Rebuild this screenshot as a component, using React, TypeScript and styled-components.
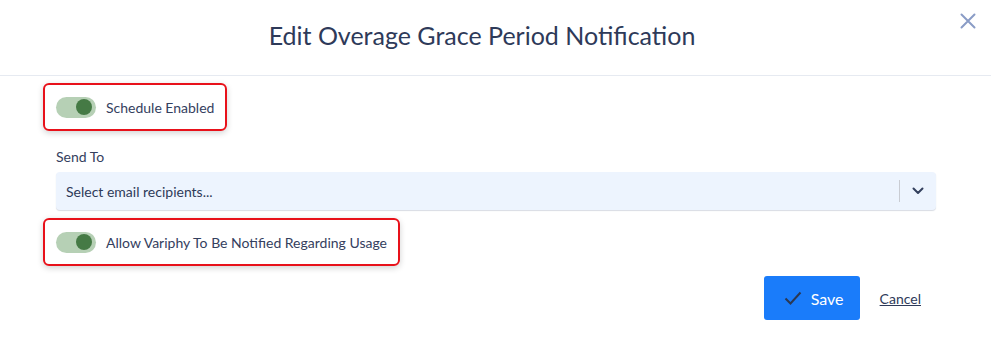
import React from 'react'
import styled, { createGlobalStyle } from 'styled-components'

const GlobalStyle = createGlobalStyle`
    body {
        margin: 0;
        background: #ffffff;
        font-family: Lato, "Open Sans", sans-serif;
        color: #2e3a59;
    }
`

const Toggle = ({ on }: { on: boolean }) => (
    <Track $on={on}>
        <Knob $on={on} />
    </Track>
)

export default function App() {
    return (
        <Modal>
            <GlobalStyle />
            <Header>
                <Title>Edit Overage Grace Period Notification</Title>
                <Close aria-label="close">
                    <svg width="16" height="16" viewBox="0 0 16 16">
                        <path d="M1.5 1.5 L14.5 14.5 M14.5 1.5 L1.5 14.5" stroke="#8a9cc6" strokeWidth="2" strokeLinecap="round" />
                    </svg>
                </Close>
            </Header>
            <Body>
                <Highlight>
                    <Toggle on />
                    <ToggleLabel>Schedule Enabled</ToggleLabel>
                </Highlight>

                <Field>
                    <FieldLabel>Send To</FieldLabel>
                    <Select>
                        <Placeholder>Select email recipients...</Placeholder>
                        <Separator />
                        <Chevron>
                            <svg width="12" height="8" viewBox="0 0 12 8">
                                <path d="M1.5 1.5 L6 6 L10.5 1.5" fill="none" stroke="#34405e" strokeWidth="2" strokeLinecap="round" strokeLinejoin="round" />
                            </svg>
                        </Chevron>
                    </Select>
                </Field>

                <Highlight>
                    <Toggle on />
                    <ToggleLabel>Allow Variphy To Be Notified Regarding Usage</ToggleLabel>
                </Highlight>

                <Actions>
                    <SaveButton>
                        <svg width="18" height="14" viewBox="0 0 18 14">
                            <path d="M1.5 7.5 L6.5 12.5 L16.5 1.5" fill="none" stroke="#2b3852" strokeWidth="2" />
                        </svg>
                        Save
                    </SaveButton>
                    <CancelLink href="#">Cancel</CancelLink>
                </Actions>
            </Body>
        </Modal>
    )
}

const Modal = styled.div`
    width: 991px;
    height: 354px;
    background: #ffffff;
    overflow: hidden;
`

const Header = styled.header`
    position: relative;
    height: 76px;
    border-bottom: 1px solid #e6eaf1;
    display: flex;
    align-items: center;
    justify-content: center;
    padding: 0 27px 5px 0;
    box-sizing: border-box;
`

const Title = styled.h1`
    margin: 0;
    font-size: 25px;
    font-weight: 400;
    color: #2e3a59;
`

const Close = styled.button`
    position: absolute;
    top: 13px;
    right: 15px;
    border: 0;
    background: none;
    padding: 0;
    display: flex;
    cursor: pointer;
`

const Body = styled.div`
    padding: 7px 55px 0 56px;
    display: flex;
    flex-direction: column;
    align-items: flex-start;
`

const Highlight = styled.div`
    display: inline-flex;
    align-items: center;
    gap: 10px;
    height: 48px;
    box-sizing: border-box;
    margin-left: -13px;
    padding: 0 11px 0 11px;
    border: 2px solid #e8111a;
    border-radius: 6px;
    box-shadow: 0 2px 6px rgba(0, 0, 0, 0.18);
`

const Track = styled.span<{ $on: boolean }>`
    width: 40px;
    height: 21px;
    border-radius: 11px;
    background: ${p => (p.$on ? '#b6d0b5' : '#d8dde6')};
    display: flex;
    align-items: center;
    justify-content: ${p => (p.$on ? 'flex-end' : 'flex-start')};
    padding: 0 4px;
    box-sizing: border-box;
`

const Knob = styled.span<{ $on: boolean }>`
    width: 16px;
    height: 16px;
    border-radius: 50%;
    background: ${p => (p.$on ? '#457a45' : '#ffffff')};
`

const ToggleLabel = styled.span`
    font-size: 14px;
    color: #34405e;
`

const Field = styled.div`
    width: 100%;
    margin-top: 17px;
    margin-bottom: 8px;
`

const FieldLabel = styled.div`
    font-size: 14px;
    color: #34405e;
    line-height: 17px;
    margin-bottom: 7px;
`

const Select = styled.div`
    height: 38px;
    width: 100%;
    background: #edf4fe;
    border-radius: 4px;
    box-shadow: 0 1px 1px rgba(40, 60, 100, 0.18);
    display: flex;
    align-items: center;
    box-sizing: border-box;
`

const Placeholder = styled.span`
    flex: 1;
    padding-left: 10px;
    font-size: 14px;
    color: #2e3a59;
`

const Separator = styled.span`
    width: 1px;
    height: 22px;
    background: #c9ccd3;
`

const Chevron = styled.span`
    width: 36px;
    display: flex;
    justify-content: center;
`

const Actions = styled.div`
    align-self: flex-end;
    display: flex;
    align-items: center;
    gap: 20px;
    margin-top: 10px;
    margin-right: 15px;
`

const SaveButton = styled.button`
    width: 96px;
    height: 44px;
    border: 0;
    border-radius: 3px;
    background: #1a7cfa;
    color: #ffffff;
    font-family: Lato, "Open Sans", sans-serif;
    font-size: 16px;
    display: flex;
    align-items: center;
    justify-content: center;
    gap: 9px;
    padding: 0 0 0 4px;
    cursor: pointer;
`

const CancelLink = styled.a`
    font-size: 14px;
    color: #2e3a59;
    text-decoration: underline;
`
